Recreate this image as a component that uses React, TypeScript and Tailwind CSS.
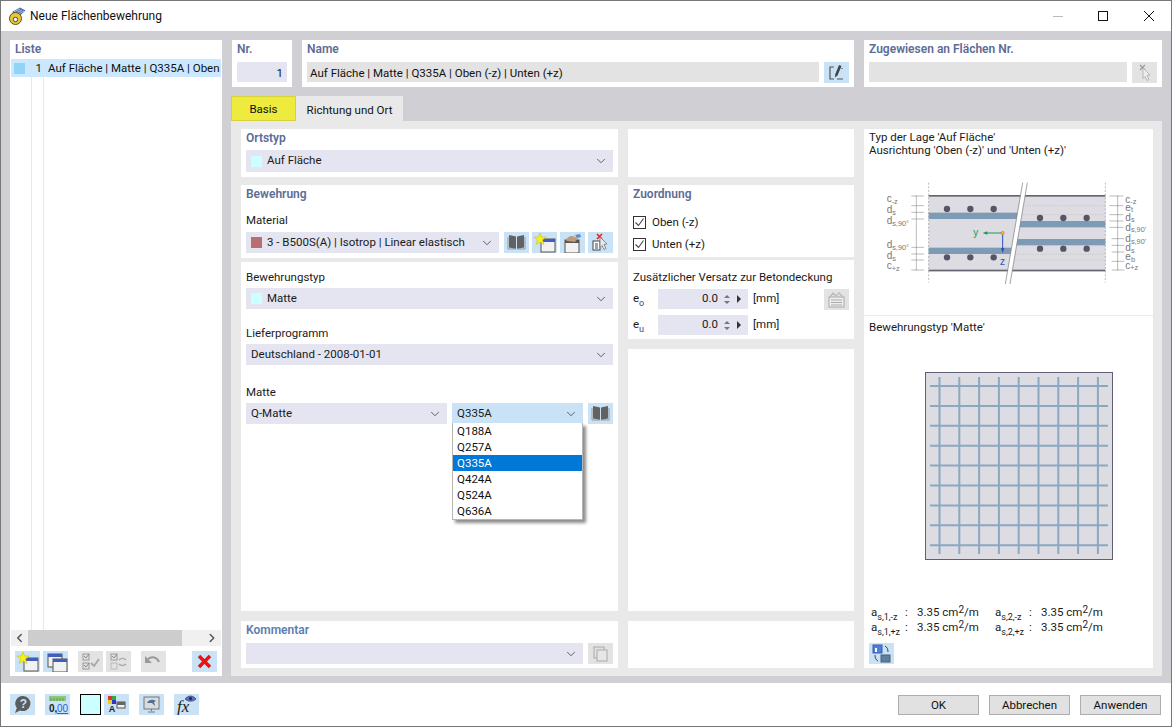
import { ChevronDown, ChevronLeft, ChevronRight } from "lucide-react";
import type { ReactNode } from "react";

const Win = ({ x, y, w = 14, h = 13, bar = "#3f5fc0" }: { x: number; y: number; w?: number; h?: number; bar?: string }) => (
  <g>
    <rect x={x} y={y} width={w} height={h} fill="#f2f2f2" stroke="#555" strokeWidth="1" />
    <rect x={x} y={y} width={w} height={3} fill={bar} />
  </g>
);

const Star = ({ x, y }: { x: number; y: number }) => (
  <polygon
    transform={`translate(${x} ${y})`}
    points="0,-6 1.6,-2 6,-2 2.6,1 4,5.5 0,3 -4,5.5 -2.6,1 -6,-2 -1.6,-2"
    fill="#f7ee1f"
    stroke="#c8b800"
    strokeWidth="0.5"
  />
);

const Svg = ({ children }: { children: ReactNode }) => (
  <svg width="25" height="21" viewBox="0 0 25 21">
    {children}
  </svg>
);

const BookIcon = () => (
  <Svg>
    <path d="M5 3l7 1.500V17l-7-1.500z" fill="#626262" />
    <path d="M20 3l-7 1.500V17l7-1.500z" fill="#626262" />
    <path d="M4 5v12h8M21 5v12h-8" fill="none" stroke="#999" />
  </Svg>
);
const NewIcon = () => (
  <Svg>
    <Win x={9} y={7} />
    <Star x={8} y={7} />
  </Svg>
);
const CopyIcon = () => (
  <Svg>
    <Win x={5} y={3} />
    <Win x={10} y={8} />
  </Svg>
);
const HandIcon = () => (
  <Svg>
    <Win x={5} y={8} bar="#555" />
    <path d="M6 8c2-4 6-5 9-3l3 1-3 4-8-1z" fill="#c09a78" />
    <path d="M15 3l5-1 1 3-4 1z" fill="#5b8fd0" />
  </Svg>
);
const DeleteCursorIcon = () => (
  <Svg>
    <path d="M9 2l5 5M14 2l-5 5" stroke="#e22" strokeWidth="1.6" />
    <rect x="5" y="9" width="7" height="9" fill="#fff" stroke="#444" />
    <path d="M7 12h3M7 14h3M7 16h3" stroke="#444" />
    <path d="M12 5l7 7-3 .5 2 4-2 1-2-4-2 2z" fill="#e8e8e8" stroke="#777" strokeWidth="0.8" />
  </Svg>
);
const EditIcon = () => (
  <Svg>
    <path d="M10 5H6v12h4M13 17h6M18 6v1" fill="none" stroke="#555" strokeWidth="1.2" />
    <path d="M15 3l2.500 1-4 9.500-2.500 2 .2-3z" fill="#444" />
  </Svg>
);
const CursorOffIcon = () => (
  <Svg>
    <path d="M8 3l5 5M13 3l-5 5" stroke="#999" strokeWidth="1.2" />
    <path d="M11 6l7 7-3 .5 2 4-2 1-2-4-2 2z" fill="#eee" stroke="#aaa" strokeWidth="0.8" />
  </Svg>
);
const CheckAllIcon = () => (
  <Svg>
    <rect x="5" y="3" width="6" height="6" fill="none" stroke="#999" />
    <rect x="5" y="12" width="6" height="6" fill="none" stroke="#999" />
    <path d="M6 5l2 2 3-4M6 14l2 2 3-4" fill="none" stroke="#888" />
    <path d="M13 12l3 3 5-7" fill="none" stroke="#aaa" strokeWidth="2" />
  </Svg>
);
const CheckSwapIcon = () => (
  <Svg>
    <rect x="5" y="3" width="6" height="6" fill="none" stroke="#999" />
    <rect x="5" y="12" width="6" height="6" fill="none" stroke="#bbb" />
    <path d="M6 5l2 2 3-4" fill="none" stroke="#888" />
    <path d="M13 9c2-2 5-2 7 0M20 13c-2 2-5 2-7 0" fill="none" stroke="#aaa" strokeWidth="1.5" />
  </Svg>
);
const UndoIcon = () => (
  <Svg>
    <path d="M7 8c4-3 9-2 11 3" fill="none" stroke="#999" strokeWidth="2" />
    <path d="M4 5v7h7z" fill="#999" />
  </Svg>
);
const DeleteIcon = () => (
  <Svg>
    <path d="M7 5l11 11M18 5L7 16" stroke="#ee1111" strokeWidth="3.4" />
  </Svg>
);
const HelpIcon = () => (
  <Svg>
    <path d="M13 2a7.500 7.500 0 1 1-3 14.400L5 19l1.800-5A7.500 7.500 0 0 1 13 2z" fill="#5c5c5c" />
    <text x="13.500" y="13.500" textAnchor="middle" fontSize="12" fontWeight="700" fill="#c9e2f6" fontFamily="Liberation Sans, sans-serif">?</text>
  </Svg>
);
const UnitsIcon = () => (
  <Svg>
    <rect x="4" y="2" width="17" height="5" fill="#8fc77a" />
    <path d="M6 4v3M9 4v3M12 4v3M15 4v3M18 4v3" stroke="#5e9a4a" />
    <text x="4" y="18" fontSize="10" fontWeight="700" fill="#222" fontFamily="Liberation Sans, sans-serif">0,</text>
    <text x="12" y="18" fontSize="10" fill="#2a62d8" textDecoration="underline" fontFamily="Liberation Sans, sans-serif">00</text>
  </Svg>
);
const ColorsIcon = () => (
  <Svg>
    <rect x="4" y="2" width="4" height="4" fill="#d33" />
    <rect x="8" y="2" width="4" height="4" fill="#3a3" />
    <rect x="4" y="6" width="4" height="4" fill="#e8d020" />
    <rect x="8" y="6" width="4" height="4" fill="#33c" />
    <text x="8" y="18" textAnchor="middle" fontSize="9" fontWeight="700" fill="#222" fontFamily="Liberation Sans, sans-serif">A</text>
    <Win x={13} y={8} w={8} h={6} bar="#666" />
  </Svg>
);
const ScreenIcon = () => (
  <Svg>
    <rect x="5" y="3" width="15" height="12" fill="#d9dde2" stroke="#777" />
    <path d="M8 9c2-4 6-4 9-2l-2 1 1 4-3-3z" fill="#4f6f8f" />
    <path d="M12.500 15v2M9 18h7" stroke="#777" />
  </Svg>
);
const FormulaIcon = () => (
  <Svg>
    <text x="3" y="18" fontSize="17" fontStyle="italic" fill="#222" fontFamily="Liberation Serif, serif">fx</text>
    <path d="M11 5c3-4 8-4 11 0-3 3-8 3-11 0z" fill="#5a6fd0" stroke="#333" strokeWidth="0.6" />
    <circle cx="16.500" cy="4.500" r="1.500" fill="#223" />
  </Svg>
);
const SwapViewIcon = () => (
  <Svg>
    <rect x="4" y="2" width="9" height="8" fill="#4d7fdc" stroke="#3a5fa8" />
    <rect x="6" y="5" width="2" height="4" fill="#fff" />
    <rect x="12" y="12" width="9" height="7" fill="#5f7f9f" stroke="#46607a" />
    <path d="M16 3c2 1 3 3 3 6M9 18c-2-1-3-3-3-6" fill="none" stroke="#444" />
  </Svg>
);
const TableIcon = () => (
  <Svg>
    <rect x="5" y="8" width="15" height="10" fill="#eee" stroke="#aaa" />
    <path d="M7 11h11M7 13.500h11M7 16h11" stroke="#aaa" />
    <path d="M6 8l3-4 3 3 3-3 4 4" fill="none" stroke="#bbb" strokeWidth="1.400" />
  </Svg>
);
const CopySmallIcon = () => (
  <Svg>
    <rect x="6" y="4" width="10" height="11" fill="none" stroke="#aaa" />
    <rect x="9" y="7" width="10" height="11" fill="#e6e6e6" stroke="#aaa" />
  </Svg>
);
const AppIcon = () => (
  <svg width="18" height="18" viewBox="0 0 18 18">
    <path d="M4 5l8-4.500 5.500 3-7 6.500z" fill="#4a6fa8" />
    <path d="M6 5l6-3M8 6l6-3M10 7l6-3" stroke="#cfd9ea" strokeWidth="0.8" />
    <circle cx="7.500" cy="11.500" r="6" fill="#eac43a" stroke="#5f5120" />
    <circle cx="7.500" cy="12.500" r="2.200" fill="#fff" stroke="#444" />
  </svg>
);

const IconBtn = ({ children, off }: { children: ReactNode; off?: boolean }) => (
  <div className={`w-[25px] h-[21px] shrink-0 ${off ? "bg-[#e3e3e3]" : "bg-[#c9e2f6]"}`}>{children}</div>
);

const Label = ({ children, className = "" }: { children: ReactNode; className?: string }) => (
  <div className={`text-[12px] leading-[16px] font-semibold text-[#5c6c96] ${className}`}>{children}</div>
);

const Text = ({ children, className = "" }: { children: ReactNode; className?: string }) => (
  <div className={`text-[11.500px] leading-[16px] text-[#1a1a1a] whitespace-nowrap ${className}`}>{children}</div>
);

const Select = ({ children, className = "", swatch }: { children?: ReactNode; className?: string; swatch?: string }) => (
  <div className={`h-[21px] flex items-center pl-[5px] pr-[5px] bg-[#e4e5f0] text-[11.500px] text-[#1a1a1a] ${className}`}>
    {swatch && <div className="w-[11px] h-[11px] mr-[5px]" style={{ background: swatch }} />}
    <div className="flex-1 truncate">{children}</div>
    <ChevronDown size={14} strokeWidth={1.4} className="text-[#444]" />
  </div>
);

const Checkbox = ({ label }: { label: string }) => (
  <div className="flex items-center h-[22px] gap-[6px]">
    <div className="w-[13px] h-[13px] border border-[#333] bg-white flex items-center justify-center">
      <svg width="11" height="11" viewBox="0 0 11 11">
        <path d="M1.500 5.500l3 3 5-7" fill="none" stroke="#444" strokeWidth="1.100" />
      </svg>
    </div>
    <Text>{label}</Text>
  </div>
);

const Offset = ({ sub }: { sub: string }) => (
  <div className="flex items-center h-[20px]">
    <div className="w-[25px] text-[11.500px] text-[#1a1a1a]">
      e<sub className="text-[9px] text-[#2a4a80] align-[-1px]">{sub}</sub>
    </div>
    <div className="w-[90px] h-[20px] bg-[#e4e5f0] flex items-center justify-end pr-[7px] gap-[6px] text-[11.500px] text-[#1a1a1a]">
      <span>0.0</span>
      <div className="flex flex-col items-center gap-[3px]">
        <div className="w-0 h-0 border-x-[3px] border-x-transparent border-b-[3px] border-b-[#777]" />
        <div className="w-0 h-0 border-x-[3px] border-x-transparent border-t-[3px] border-t-[#777]" />
      </div>
      <div className="w-0 h-0 border-y-[4px] border-y-transparent border-l-[4px] border-l-[#333] ml-[1px]" />
    </div>
    <div className="ml-[5px] text-[11.500px] text-[#1a1a1a]">[mm]</div>
  </div>
);

const Area = ({ sub }: { sub: string }) => (
  <div className="flex items-baseline h-[15px] text-[11.500px] leading-[15px] text-[#1a1a1a] whitespace-nowrap">
    <span className="w-[34px]">
      a<sub className="text-[9px] leading-none align-[-2px]">{sub}</sub>
    </span>
    <span className="w-[12px]">:</span>
    <span>
      3.35 cm<sup className="text-[10px] leading-none top-0 align-[3px]">2</sup>/m
    </span>
  </div>
);

const SectionDrawing = () => (
  <svg width="290" height="120" viewBox="0 0 870 360" fontFamily="Liberation Sans, sans-serif" fontSize="30" fill="#777">
    <rect x="206" y="76" width="530" height="228" fill="#dcdce2" />
    <rect x="206" y="75" width="530" height="5" fill="#666672" />
    <rect x="206" y="299" width="530" height="5" fill="#666672" />
    <path d="M206 38v300M736 38v300" stroke="#777" strokeDasharray="6 5" strokeWidth="1.500" />
    <rect x="206" y="128" width="270" height="19" fill="#7d9bb5" />
    <rect x="206" y="233" width="250" height="19" fill="#7d9bb5" />
    <rect x="478" y="153" width="258" height="19" fill="#7d9bb5" />
    <rect x="468" y="207" width="268" height="19" fill="#7d9bb5" />
    <path d="M496 107h240M490 134h246M460 253h276M455 270h281" stroke="#aaa" strokeDasharray="2 3" strokeWidth="1.500" />
    {[261, 331, 401].map((x) => (
      <g key={x}>
        <circle cx={x} cy="117" r="9.500" fill="#555566" />
        <circle cx={x} cy="262" r="9.500" fill="#555566" />
      </g>
    ))}
    {[540, 610, 680].map((x) => (
      <g key={x}>
        <circle cx={x} cy="144" r="9.500" fill="#555566" />
        <circle cx={x} cy="236" r="9.500" fill="#555566" />
      </g>
    ))}
    <polygon points="488,38 502,38 450,342 436,342" fill="#fff" />
    <path d="M488 38L436 342M502 38L450 342" stroke="#777" strokeWidth="2" />
    <path d="M428 189h-50" stroke="#1a9a4a" strokeWidth="3" />
    <polygon points="368,189 382,184 382,194" fill="#1a9a4a" />
    <path d="M428 189v52" stroke="#2a50c0" strokeWidth="3" />
    <polygon points="428,250 423,234 433,234" fill="#2a50c0" />
    <circle cx="428" cy="189" r="5" fill="#f2c01c" stroke="#c33" />
    <text x="340" y="198" fill="#1a9a4a">y</text>
    <text x="420" y="285" fill="#2a50c0">z</text>
    <path d="M169 76v226M154 78h38M154 107h38M154 127h38M154 147h38M154 232h38M154 252h38M154 270h38M154 300h38" stroke="#777" strokeWidth="1.500" />
    <path d="M773 76v226M748 78h42M748 107h42M748 134h42M748 153h42M748 172h42M755 206h38M755 226h38M755 246h38M755 274h38M755 300h38" stroke="#777" strokeWidth="1.500" />
    <text x="80" y="96">c<tspan fontSize="22" dy="5">-z</tspan></text>
    <text x="80" y="130">d<tspan fontSize="22" dy="5">s</tspan></text>
    <text x="80" y="162">d<tspan fontSize="22" dy="5">s,90°</tspan></text>
    <text x="80" y="235">d<tspan fontSize="22" dy="5">s,90°</tspan></text>
    <text x="80" y="268">d<tspan fontSize="22" dy="5">s</tspan></text>
    <text x="80" y="298">c<tspan fontSize="22" dy="5">+z</tspan></text>
    <text x="796" y="98">c<tspan fontSize="22" dy="5">-z</tspan></text>
    <text x="796" y="122">e<tspan fontSize="22" dy="5">t</tspan></text>
    <text x="796" y="152">d<tspan fontSize="22" dy="5">s</tspan></text>
    <text x="796" y="182">d<tspan fontSize="22" dy="5">s,90'</tspan></text>
    <text x="796" y="216">d<tspan fontSize="22" dy="5">s,90'</tspan></text>
    <text x="796" y="244">d<tspan fontSize="22" dy="5">s</tspan></text>
    <text x="796" y="270">e<tspan fontSize="22" dy="5">b</tspan></text>
    <text x="796" y="296">c<tspan fontSize="22" dy="5">+z</tspan></text>
  </svg>
);

const MeshDrawing = () => {
  const lines = [0, 1, 2, 3, 4, 5, 6, 7, 8];
  return (
    <svg width="190" height="190" viewBox="0 0 190 190">
      <rect x="0.500" y="0.500" width="187" height="187" fill="#dcdce2" stroke="#5f5f75" />
      {lines.map((i) => (
        <g key={i} stroke="#8ba8c2" strokeWidth="2">
          <path d={`M${14.500 + i * 19.800} 5V182`} />
          <path d={`M5 ${14 + i * 19.900}H183`} />
        </g>
      ))}
    </svg>
  );
};

export default function App() {
  return (
    <div className="w-[1172px] h-[727px] flex flex-col bg-white border border-[#777] overflow-hidden font-['Roboto',sans-serif]">
      <div className="h-[30px] flex items-center pl-[7px] shrink-0">
        <AppIcon />
        <div className="ml-[4px] text-[12px] text-[#111]">Neue Flächenbewehrung</div>
        <div className="ml-auto flex items-center mr-[17px]">
          <div className="w-[10px] h-px bg-[#bbb] mr-[35px]" />
          <div className="w-[10px] h-[10px] border border-[#111] mr-[36px]" />
          <svg width="10" height="10" viewBox="0 0 10 10">
            <path d="M0 0l10 10M10 0L0 10" stroke="#111" strokeWidth="1" />
          </svg>
        </div>
      </div>

      <div className="flex-1 flex bg-[#d0d0d4] pt-[9px] pl-[9px] pr-[9px] pb-[7px] gap-[9px] min-h-0">
        {/* list on the left */}
        <div className="w-[212px] bg-white flex flex-col shrink-0">
          <Label className="pl-[5px] pt-[1px] h-[19px]">Liste</Label>
          <div className="flex-1 flex flex-col ml-px mr-px min-h-0">
            <div className="h-[18px] bg-[#cce8ff] flex items-center overflow-hidden">
              <div className="w-[21px] pl-[3px] shrink-0">
                <div className="w-[11px] h-[11px] bg-[#90d5f5]" />
              </div>
              <div className="w-[12px] text-right text-[11.500px] text-[#111] pr-[2px] pt-[1px] shrink-0">1</div>
              <div className="pl-[4px] pt-[1px] text-[11.500px] text-[#111] whitespace-nowrap">Auf Fläche | Matte | Q335A | Oben</div>
            </div>
            <div className="flex-1 flex">
              <div className="w-[21px] border-r border-[#e8e8e8]" />
              <div className="w-[12px] border-r border-[#e8e8e8]" />
            </div>
            <div className="h-[16px] bg-[#f0f0f0] flex items-center shrink-0">
              <ChevronLeft size={14} strokeWidth={2.500} className="text-[#555] w-[17px]" />
              <div className="w-[154px] h-full bg-[#cdcdcd]" />
              <ChevronRight size={14} strokeWidth={2.500} className="text-[#555] ml-auto mr-[2px]" />
            </div>
          </div>
          <div className="h-[30px] flex items-start pt-[5px] pl-[5px] shrink-0">
            <IconBtn><NewIcon /></IconBtn>
            <div className="ml-[3px]"><IconBtn><CopyIcon /></IconBtn></div>
            <div className="ml-[10px]"><IconBtn off><CheckAllIcon /></IconBtn></div>
            <div className="ml-[3px]"><IconBtn off><CheckSwapIcon /></IconBtn></div>
            <div className="ml-[10px]"><IconBtn off><UndoIcon /></IconBtn></div>
            <div className="ml-[26px]"><IconBtn><DeleteIcon /></IconBtn></div>
          </div>
        </div>

        <div className="w-[931px] flex flex-col shrink-0">
          {/* header row */}
          <div className="flex gap-[10px] h-[47px] pl-px shrink-0">
            <div className="w-[60px] bg-white px-[5px]">
              <Label className="pt-[1px] h-[22px]">Nr.</Label>
              <div className="h-[20px] bg-[#e4e5f0] text-right text-[11.500px] leading-[22px] pr-[4px] text-[#111]">1</div>
            </div>
            <div className="w-[552px] bg-white px-[5px]">
              <Label className="pt-[1px] h-[22px]">Name</Label>
              <div className="flex gap-[5px]">
                <div className="flex-1 h-[20px] bg-[#e3e3e3] text-[11.500px] leading-[22px] pl-[3px] text-[#111]">Auf Fläche | Matte | Q335A | Oben (-z) | Unten (+z)</div>
                <IconBtn><EditIcon /></IconBtn>
              </div>
            </div>
            <div className="w-[298px] bg-white px-[5px]">
              <Label className="pt-[1px] h-[22px]">Zugewiesen an Flächen Nr.</Label>
              <div className="flex gap-[5px]">
                <div className="flex-1 h-[20px] bg-[#e3e3e3]" />
                <IconBtn off><CursorOffIcon /></IconBtn>
              </div>
            </div>
          </div>

          {/* tabs */}
          <div className="flex mt-[9px] h-[25px] shrink-0">
            <div className="w-[65px] bg-[#eeea3e] border border-[#d6d23a] text-center text-[11.500px] leading-[25px] text-[#111]">Basis</div>
            <div className="w-[107px] bg-[#e9e9e9] text-center text-[11.500px] leading-[28px] text-[#111]">Richtung und Ort</div>
          </div>

          <div className="flex-1 bg-[#e9e9e9] flex gap-[10px] pt-[8px] pl-[10px] pb-[8px] min-h-0">
            {/* left column */}
            <div className="w-[377px] flex flex-col">
              <div className="h-[48px] bg-white px-[5px] shrink-0">
                <Label className="pt-[1px] h-[21px]">Ortstyp</Label>
                <Select swatch="#ccffff" className="h-[22px]">Auf Fläche</Select>
              </div>
              <div className="h-[73px] mt-[8px] bg-white px-[5px] shrink-0">
                <Label className="pt-[1px] h-[27px]">Bewehrung</Label>
                <Text className="h-[20px]">Material</Text>
                <div className="flex gap-[3px]">
                  <Select swatch="#b96f70" className="w-[253px] mr-[2px]">3 - B500S(A) | Isotrop | Linear elastisch</Select>
                  <IconBtn><BookIcon /></IconBtn>
                  <IconBtn><NewIcon /></IconBtn>
                  <IconBtn><HandIcon /></IconBtn>
                  <IconBtn><DeleteCursorIcon /></IconBtn>
                </div>
              </div>
              <div className="flex-1 mt-[4px] bg-white px-[5px] pt-[7px]">
                <Text className="h-[19px]">Bewehrungstyp</Text>
                <Select swatch="#ccffff">Matte</Select>
                <Text className="mt-[16px] h-[19px]">Lieferprogramm</Text>
                <Select>Deutschland - 2008-01-01</Select>
                <Text className="mt-[19px] h-[19px]">Matte</Text>
                <div className="relative flex">
                  <Select className="w-[201px]">Q-Matte</Select>
                  <Select className="w-[131px] ml-[5px] !bg-[#c9e2f6]">Q335A</Select>
                  <div className="ml-[5px]"><IconBtn><BookIcon /></IconBtn></div>
                  <div className="absolute left-[206px] top-[20px] w-[131px] h-[97px] bg-white border-x border-b border-[#b5b5b5] shadow-[3px_3px_3px_rgba(0,0,0,0.45)] text-[11.500px] text-[#111]">
                    {["Q188A", "Q257A", "Q335A", "Q424A", "Q524A", "Q636A"].map((q) => (
                      <div key={q} className={`h-[16px] leading-[16px] pl-[4px] ${q === "Q335A" ? "bg-[#0078d7] text-white" : ""}`}>
                        {q}
                      </div>
                    ))}
                  </div>
                </div>
              </div>
              <div className="h-[47px] mt-[10px] bg-white px-[5px] shrink-0">
                <Label className="pt-[1px] h-[22px] !text-[#5c7cb0]">Kommentar</Label>
                <div className="flex gap-[5px]">
                  <Select className="flex-1" />
                  <IconBtn off><CopySmallIcon /></IconBtn>
                </div>
              </div>
            </div>

            {/* middle column */}
            <div className="w-[226px] flex flex-col">
              <div className="h-[48px] bg-white shrink-0" />
              <div className="h-[72px] mt-[8px] bg-white px-[5px] shrink-0">
                <Label className="pt-[1px] h-[26px]">Zuordnung</Label>
                <Checkbox label="Oben (-z)" />
                <Checkbox label="Unten (+z)" />
              </div>
              <div className="h-[79px] mt-[3px] bg-white px-[5px] pt-[9px] shrink-0">
                <Text className="h-[20px]">Zusätzlicher Versatz zur Betondeckung</Text>
                <div className="relative flex flex-col gap-[6px]">
                  <Offset sub="o" />
                  <Offset sub="u" />
                  <div className="absolute right-0 top-0"><IconBtn off><TableIcon /></IconBtn></div>
                </div>
              </div>
              <div className="flex-1 mt-[10px] bg-white" />
              <div className="h-[47px] mt-[10px] bg-white shrink-0" />
            </div>

            {/* right column */}
            <div className="w-[289px] bg-white flex flex-col">
              <div className="h-[187px] border-b border-[#e9e9e9] shrink-0 relative px-[5px] pt-[2px]">
                <Text className="!leading-[13px]">Typ der Lage 'Auf Fläche'</Text>
                <Text className="!leading-[13px]">Ausrichtung 'Oben (-z)' und 'Unten (+z)'</Text>
                <div className="absolute left-[-4px] top-[41px]"><SectionDrawing /></div>
              </div>
              <Text className="px-[5px] pt-[3px] h-[20px]">Bewehrungstyp 'Matte'</Text>
              <div className="pl-[61px] pt-[36px]"><MeshDrawing /></div>
              <div className="mt-auto px-[7px] grid grid-cols-[124px_1fr]">
                <Area sub="s,1,-z" />
                <Area sub="s,2,-z" />
                <Area sub="s,1,+z" />
                <Area sub="s,2,+z" />
              </div>
              <div className="pl-[5px] pt-[8px] pb-[4px]"><IconBtn><SwapViewIcon /></IconBtn></div>
            </div>
          </div>
        </div>
      </div>

      {/* bottom bar */}
      <div className="h-[43px] flex items-center pl-[9px] pr-[10px] shrink-0">
        <IconBtn><HelpIcon /></IconBtn>
        <div className="ml-[10px]"><IconBtn><UnitsIcon /></IconBtn></div>
        <div className="ml-[10px] w-[21px] h-[21px] bg-[#ccffff] border border-black" />
        <div className="ml-[3px]"><IconBtn><ColorsIcon /></IconBtn></div>
        <div className="ml-[10px]"><IconBtn><ScreenIcon /></IconBtn></div>
        <div className="ml-[10px]"><IconBtn><FormulaIcon /></IconBtn></div>
        <div className="ml-auto flex gap-[10px]">
          {["OK", "Abbrechen", "Anwenden"].map((b) => (
            <div key={b} className="w-[81px] h-[20px] bg-[#e1e1e1] border border-[#adadad] text-center text-[11.500px] leading-[19px] text-[#111]">
              {b}
            </div>
          ))}
        </div>
      </div>
    </div>
  );
}
